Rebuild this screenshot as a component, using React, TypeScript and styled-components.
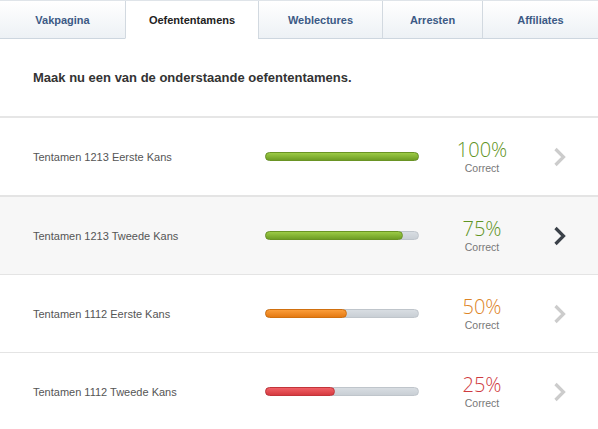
import React from "react";
import styled, { createGlobalStyle } from "styled-components";

const GlobalStyle = createGlobalStyle`
  html, body {
    margin: 0;
    padding: 0;
    background: #ffffff;
    font-family: "Liberation Sans", Arial, sans-serif;
  }
`;

type Exam = {
  name: string;
  score: number;
  fill: number; // bar fill in px, the track is 154px wide
  tone: "green" | "orange" | "red";
  active?: boolean;
};

const exams: Exam[] = [
  { name: "Tentamen 1213 Eerste Kans", score: 100, fill: 154, tone: "green" },
  { name: "Tentamen 1213 Tweede Kans", score: 75, fill: 138, tone: "green", active: true },
  { name: "Tentamen 1112 Eerste Kans", score: 50, fill: 82, tone: "orange" },
  { name: "Tentamen 1112 Tweede Kans", score: 25, fill: 70, tone: "red" },
];

const tones = {
  green: { top: "#9ccb46", bottom: "#6f9e25", border: "#6a9424", text: "#5f9424" },
  orange: { top: "#fb9d3a", bottom: "#e57a12", border: "#d0700f", text: "#dd8426" },
  red: { top: "#f06066", bottom: "#d63a40", border: "#c2343a", text: "#cf3a40" },
};

const tabs = [
  { label: "Vakpagina", width: 125 },
  { label: "Oefententamens", width: 133, selected: true },
  { label: "Weblectures", width: 124 },
  { label: "Arresten", width: 100 },
  { label: "Affiliates", width: 116 },
];

const Page = styled.div`
  width: 598px;
  height: 429px;
  overflow: hidden;
`;

const TabBar = styled.div`
  display: flex;
  height: 39px;
  border-top: 1px solid #dfe4e9;
  box-sizing: border-box;
`;

const Tab = styled.div<{ $selected?: boolean; $width: number }>`
  width: ${({ $width }) => $width}px;
  flex: none;
  display: flex;
  align-items: center;
  justify-content: center;
  box-sizing: border-box;
  font-size: 11px;
  font-weight: bold;
  color: ${({ $selected }) => ($selected ? "#222" : "#3c5a85")};
  background: ${({ $selected }) =>
    $selected ? "#ffffff" : "linear-gradient(#ffffff, #edf1f5)"};
  border-bottom: 1px solid ${({ $selected }) => ($selected ? "transparent" : "#cdd6df")};
  border-left: 1px solid #d2d9e0;
  &:first-child {
    border-left: none;
  }
  &:last-child {
    flex: 1;
  }
`;

const Intro = styled.h1`
  margin: 0;
  padding: 31px 33px 31px;
  font-size: 13px;
  font-weight: bold;
  color: #333;
  border-bottom: 2px solid #e6e6e6;
`;

const List = styled.div`
  display: flex;
  flex-direction: column;
`;

const Row = styled.div<{ $active?: boolean }>`
  height: 77px;
  display: grid;
  grid-template-columns: 232px 154px 19px 88px 1fr;
  align-items: center;
  padding-left: 33px;
  background: ${({ $active }) => ($active ? "#f7f7f7" : "#ffffff")};
  border-bottom: 1px solid #e4e4e4;
  &:nth-child(1) {
    border-bottom-width: 2px;
  }
`;

const Name = styled.div`
  font-size: 11px;
  color: #555;
`;

const Track = styled.div`
  height: 9px;
  border-radius: 5px;
  background: linear-gradient(#d8dde2, #c9cfd5);
  border: 1px solid #bfc5cb;
  box-sizing: border-box;
  position: relative;
`;

const Fill = styled.div<{ $tone: Exam["tone"] }>`
  position: absolute;
  left: -1px;
  top: -1px;
  bottom: -1px;
  border-radius: 5px;
  background: ${({ $tone }) => `linear-gradient(${tones[$tone].top}, ${tones[$tone].bottom})`};
  border: 1px solid ${({ $tone }) => tones[$tone].border};
  box-sizing: border-box;
`;

const Score = styled.div`
  grid-column: 4;
  display: flex;
  flex-direction: column;
  align-items: center;
`;

const Percent = styled.div<{ $tone: Exam["tone"] }>`
  font-family: "Open Sans", "Liberation Sans", sans-serif;
  font-weight: 300;
  font-size: 20px;
  line-height: 22px;
  color: ${({ $tone }) => tones[$tone].text};
`;

const Label = styled.div`
  font-size: 10.5px;
  color: #777;
  margin-top: 1px;
`;

const Chevron = styled.div<{ $active?: boolean }>`
  grid-column: 5;
  padding-left: 27px;
  display: flex;
  color: ${({ $active }) => ($active ? "#3b4149" : "#cccccc")};
`;

function Arrow() {
  return (
    <svg width="14" height="22" viewBox="0 0 14 22">
      <path d="M2.5 3 L10.5 11 L2.5 19" fill="none" stroke="currentColor" strokeWidth="3.2" />
    </svg>
  );
}

export default function App() {
  return (
    <Page>
      <GlobalStyle />
      <TabBar>
        {tabs.map((tab) => (
          <Tab key={tab.label} $selected={tab.selected} $width={tab.width}>
            {tab.label}
          </Tab>
        ))}
      </TabBar>
      <Intro>Maak nu een van de onderstaande oefententamens.</Intro>
      <List>
        {exams.map((exam) => (
          <Row key={exam.name} $active={exam.active}>
            <Name>{exam.name}</Name>
            <Track>
              <Fill $tone={exam.tone} style={{ width: `${exam.fill}px` }} />
            </Track>
            <Score>
              <Percent $tone={exam.tone}>{exam.score}%</Percent>
              <Label>Correct</Label>
            </Score>
            <Chevron $active={exam.active}>
              <Arrow />
            </Chevron>
          </Row>
        ))}
      </List>
    </Page>
  );
}
